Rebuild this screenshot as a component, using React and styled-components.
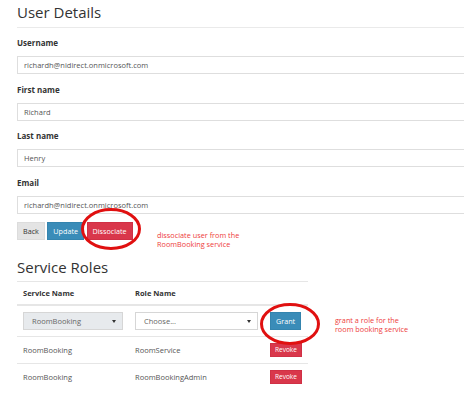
import React from "react";
import styled, { createGlobalStyle } from "styled-components";

const GlobalStyle = createGlobalStyle`
  html, body {
    margin: 0;
    padding: 0;
    background: #fff;
    overflow: hidden;
  }
  body {
    font-family: "Open Sans", "Noto Sans", sans-serif;
    color: #333;
  }
`;

const Page = styled.div`
  width: 500px;
  padding: 2px 0 0 17px;
  box-sizing: border-box;
`;

const Heading = styled.h2`
  margin: 0;
  font-size: 15px;
  line-height: 20px;
  font-weight: 400;
  color: #333;
`;

const Rule = styled.div`
  height: 1px;
  background: #eaeaea;
  margin: 5px 0 9px;
`;

const FieldGroup = styled.div`
  margin-bottom: 9.5px;
`;

const Label = styled.label`
  display: block;
  font-size: 8px;
  line-height: 12px;
  font-weight: 700;
  color: #333;
  margin-bottom: 7px;
`;

const Input = styled.div`
  height: 18px;
  box-sizing: border-box;
  border: 1px solid #dedede;
  padding: 0 6px;
  display: flex;
  align-items: center;
  font-size: 7.5px;
  color: #555;
`;

const ButtonRow = styled.div`
  display: flex;
  align-items: flex-start;
  gap: 2.5px;
  height: 18px;
  margin-top: -1px;
`;

const Button = styled.button`
  display: block;
  height: 18px;
  padding: 0 5px;
  border: 1px solid ${(p) => p.$border};
  background: ${(p) => p.$bg};
  color: ${(p) => p.$color || "#fff"};
  font-family: inherit;
  font-size: 7.2px;
  line-height: 16px;
  border-radius: 0;
  cursor: pointer;
`;

const SmallButton = styled(Button)`
  height: 14px;
  padding: 0 4px;
  font-size: 6.5px;
  line-height: 12px;
`;

const Circled = styled.div`
  position: relative;
  display: flex;
  width: max-content;
`;

const Ellipse = styled.svg`
  position: absolute;
  left: ${(p) => p.$left}px;
  top: ${(p) => p.$top}px;
  width: 60px;
  height: 42px;
  overflow: visible;
  pointer-events: none;
`;

const Note = styled.div`
  font-size: 7.3px;
  line-height: 8.5px;
  color: #ee3b3b;
  margin-left: ${(p) => p.$left}px;
  margin-top: ${(p) => p.$top}px;
  white-space: nowrap;
`;

const SectionTitle = styled(Heading)`
  margin-top: 17px;
  margin-bottom: 4px;
`;

const TableArea = styled.div`
  display: flex;
  align-items: flex-start;
`;

const Table = styled.table`
  width: 289px;
  border-collapse: collapse;
  font-size: 7.5px;
`;

const Th = styled.th`
  text-align: left;
  font-weight: 700;
  color: #333;
  padding: 6px;
  line-height: 10px;
  border-top: 1px solid #e6e6e6;
  border-bottom: 2px solid #e6e6e6;
  width: ${(p) => p.$w}px;
`;

const Td = styled.td`
  padding: 6px;
  line-height: 12px;
  color: #555;
  border-top: 1px solid #e6e6e6;
  vertical-align: middle;
`;

const Select = styled.div`
  width: ${(p) => p.$w}px;
  height: 18px;
  box-sizing: border-box;
  border: 1px solid #d6d6d6;
  background: ${(p) => (p.$disabled ? "#e7eaed" : "#fff")};
  color: #666;
  display: flex;
  align-items: center;
  justify-content: space-between;
  padding: 0 6px 0 8px;
  font-size: 7.5px;
`;

const Caret = styled.span`
  width: 0;
  height: 0;
  border-left: 2px solid transparent;
  border-right: 2px solid transparent;
  border-top: 3px solid #333;
`;

const RedRing = ({ left, top }) => (
  <Ellipse $left={left} $top={top} viewBox="0 0 60 42">
    <ellipse cx="30" cy="21" rx="28.5" ry="19.5" fill="none" stroke="#e01010" strokeWidth="3" />
  </Ellipse>
);

const fields = [
  { label: "Username", value: "richardh@nidirect.onmicrosoft.com" },
  { label: "First name", value: "Richard" },
  { label: "Last name", value: "Henry" },
  { label: "Email", value: "richardh@nidirect.onmicrosoft.com" },
];

const roles = [
  { service: "RoomBooking", role: "RoomService" },
  { service: "RoomBooking", role: "RoomBookingAdmin" },
];

export default function App() {
  return (
    <Page>
      <GlobalStyle />
      <Heading>User Details</Heading>
      <Rule />
      {fields.map((f) => (
        <FieldGroup key={f.label}>
          <Label>{f.label}</Label>
          <Input>{f.value}</Input>
        </FieldGroup>
      ))}
      <ButtonRow>
        <Button $bg="#e4e4e4" $border="#dcdcdc" $color="#333">Back</Button>
        <Button $bg="#3a8cb8" $border="#3484ae">Update</Button>
        <Circled>
          <Button $bg="#d9374b" $border="#d03045">Dissociate</Button>
          <RedRing left={-6} top={-14} />
        </Circled>
        <Note $left={22} $top={9}>
          dissociate user from the
          <br />
          RoomBooking service
        </Note>
      </ButtonRow>

      <SectionTitle>Service Roles</SectionTitle>
      <TableArea>
        <Table>
          <thead>
            <tr>
              <Th $w={99}>Service Name</Th>
              <Th $w={122}>Role Name</Th>
              <Th></Th>
            </tr>
          </thead>
          <tbody>
            <tr>
              <Td>
                <Select $w={100} $disabled>
                  RoomBooking <Caret />
                </Select>
              </Td>
              <Td>
                <Select $w={123}>
                  Choose... <Caret />
                </Select>
              </Td>
              <Td>
                <Circled>
                  <Button $bg="#3a8cb8" $border="#3484ae">Grant</Button>
                  <RedRing left={-10} top={-9} />
                </Circled>
              </Td>
            </tr>
            {roles.map((r) => (
              <tr key={r.role}>
                <Td>{r.service}</Td>
                <Td>{r.role}</Td>
                <Td>
                  <SmallButton $bg="#d9374b" $border="#d03045">Revoke</SmallButton>
                </Td>
              </tr>
            ))}
          </tbody>
        </Table>
        <Note $left={27} $top={35}>
          grant a role for the
          <br />
          room booking service
        </Note>
      </TableArea>
    </Page>
  );
}
